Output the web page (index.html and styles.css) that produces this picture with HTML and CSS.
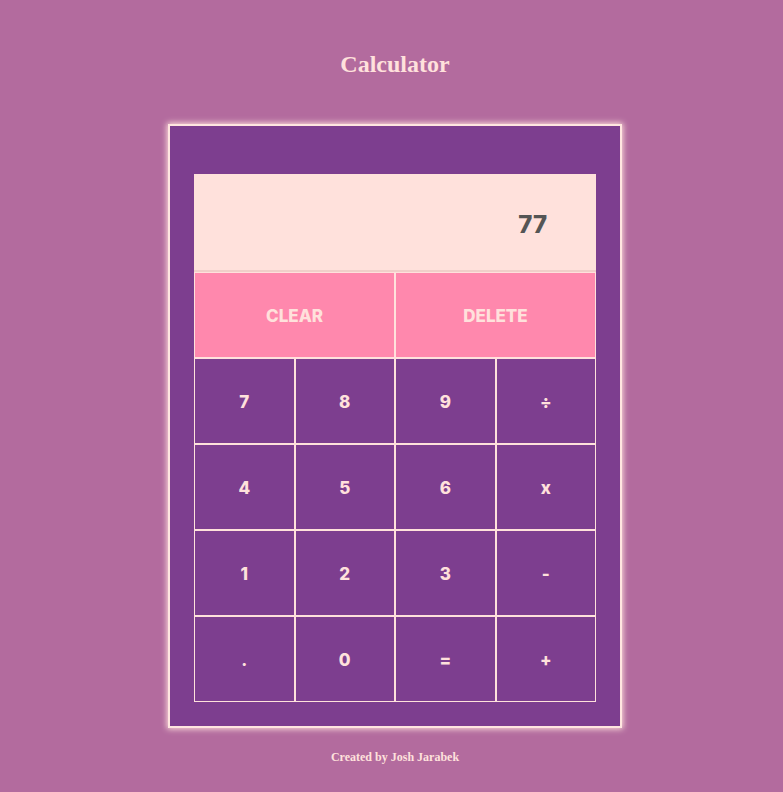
FILE: index.html
```html
<!DOCTYPE html>
<html>
<head>
<meta charset="utf-8">
<link rel="stylesheet" href="styles.css">
</head>
<body>
<h1 class="title">Calculator</h1>
<div class="calc">
  <div class="grid">
    <div class="display">77</div>
    <button class="btn wide">CLEAR</button>
    <button class="btn wide">DELETE</button>
    <button class="btn num">7</button>
    <button class="btn num">8</button>
    <button class="btn num">9</button>
    <button class="btn num">÷</button>
    <button class="btn num">4</button>
    <button class="btn num">5</button>
    <button class="btn num">6</button>
    <button class="btn num">x</button>
    <button class="btn num">1</button>
    <button class="btn num">2</button>
    <button class="btn num">3</button>
    <button class="btn num">-</button>
    <button class="btn num">.</button>
    <button class="btn num">0</button>
    <button class="btn num">=</button>
    <button class="btn num">+</button>
  </div>
</div>
<p class="footer">Created by Josh Jarabek</p>
</body>
</html>
```
FILE: styles.css
```css
html, body {
  margin: 0;
  padding: 0;
}
body {
  background: #b36b9e;
  display: flex;
  flex-direction: column;
  align-items: center;
  padding-left: 7px;
  font-family: "Liberation Serif", serif;
  color: #ffe1dc;
  min-height: 792px;
  box-sizing: border-box;
}
.title {
  margin: 50px 0 0;
  font-size: 24px;
  line-height: 28px;
  font-weight: bold;
  color: #ffe1dc;
}
.calc {
  margin-top: 46px;
  padding: 48px 24px 24px;
  box-sizing: border-box;
  background: #7d3e8f;
  border: 2px solid #ffe6e0;
  box-shadow: 0 0 6px 1px #ffe1dc;
  width: 454px;
}
.grid {
  display: grid;
  grid-template-columns: repeat(4, 1fr);
  grid-template-rows: 98px repeat(5, 86px);
  width: 402px;
}
.display {
  grid-column: 1 / -1;
  background: #ffe1dc;
  border-bottom: 2px solid #f0cfc9;
  box-sizing: border-box;
  display: flex;
  align-items: center;
  justify-content: flex-end;
  padding-right: 49px;
  padding-top: 5px;
  font-family: Inter, "Liberation Sans", sans-serif;
  font-weight: 800;
  font-size: 24px;
  color: #555555;
}
.btn {
  margin: 0;
  border: 1px solid #ffe1dc;
  box-sizing: border-box;
  font-family: Inter, "Liberation Sans", sans-serif;
  font-weight: 800;
  font-size: 17px;
  color: #ffe1dc;
  background: #7d3e8f;
  padding: 2px 0 0;
}
.btn.wide {
  grid-column: span 2;
  background: #ff88ad;
}
.footer {
  margin: 22px 0 0;
  font-size: 12px;
  line-height: 14px;
  font-weight: bold;
  color: #ffe1dc;
}
```
